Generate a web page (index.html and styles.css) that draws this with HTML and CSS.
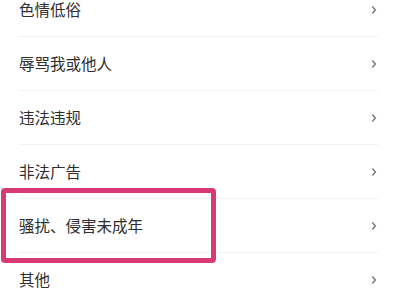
FILE: index.html
```html
<!DOCTYPE html>
<html lang="zh">
<head>
<meta charset="utf-8">
<link rel="stylesheet" href="styles.css">
</head>
<body>
<div class="page">
  <ul class="list">
    <li class="row"><div class="inner"><span class="label">色情低俗</span><svg class="chev" width="6" height="10" viewBox="0 0 6 10"><polyline points="1.4,1.5 4.4,5 1.4,8.5" fill="none" stroke="#707070" stroke-width="1.3"/></svg></div></li>
    <li class="row"><div class="inner"><span class="label">辱骂我或他人</span><svg class="chev" width="6" height="10" viewBox="0 0 6 10"><polyline points="1.4,1.5 4.4,5 1.4,8.5" fill="none" stroke="#707070" stroke-width="1.3"/></svg></div></li>
    <li class="row"><div class="inner"><span class="label">违法违规</span><svg class="chev" width="6" height="10" viewBox="0 0 6 10"><polyline points="1.4,1.5 4.4,5 1.4,8.5" fill="none" stroke="#707070" stroke-width="1.3"/></svg></div></li>
    <li class="row"><div class="inner"><span class="label">非法广告</span><svg class="chev" width="6" height="10" viewBox="0 0 6 10"><polyline points="1.4,1.5 4.4,5 1.4,8.5" fill="none" stroke="#707070" stroke-width="1.3"/></svg></div></li>
    <li class="row"><div class="inner"><span class="label">骚扰、侵害未成年</span><svg class="chev" width="6" height="10" viewBox="0 0 6 10"><polyline points="1.4,1.5 4.4,5 1.4,8.5" fill="none" stroke="#707070" stroke-width="1.3"/></svg></div></li>
    <li class="row"><div class="inner"><span class="label">其他</span><svg class="chev" width="6" height="10" viewBox="0 0 6 10"><polyline points="1.4,1.5 4.4,5 1.4,8.5" fill="none" stroke="#707070" stroke-width="1.3"/></svg></div></li>
  </ul>
  <div class="highlight"></div>
</div>
</body>
</html>
```
FILE: styles.css
```css
html, body {
  margin: 0;
  padding: 0;
  background: #ffffff;
}
.page {
  position: relative;
  width: 400px;
  height: 301px;
  overflow: hidden;
  font-family: "Noto Sans CJK SC", "Noto Sans", sans-serif;
}
.list {
  list-style: none;
  margin: -17px 0 0 0;
  padding: 0 0 0 19px;
}
.row {
  display: block;
}
.inner {
  height: 53px;
  border-bottom: 1px solid #f2f2f2;
  margin-right: 22px;
  display: flex;
  align-items: center;
  justify-content: space-between;
}
.label {
  font-size: 15.5px;
  color: #2e2e2e;
  line-height: 1;
}
.chev {
  display: block;
  margin-right: 1px;
}
.highlight {
  position: absolute;
  left: 1px;
  top: 188px;
  width: 205px;
  height: 65px;
  border: 5.5px solid #d83a73;
  border-radius: 4px;
}
```
